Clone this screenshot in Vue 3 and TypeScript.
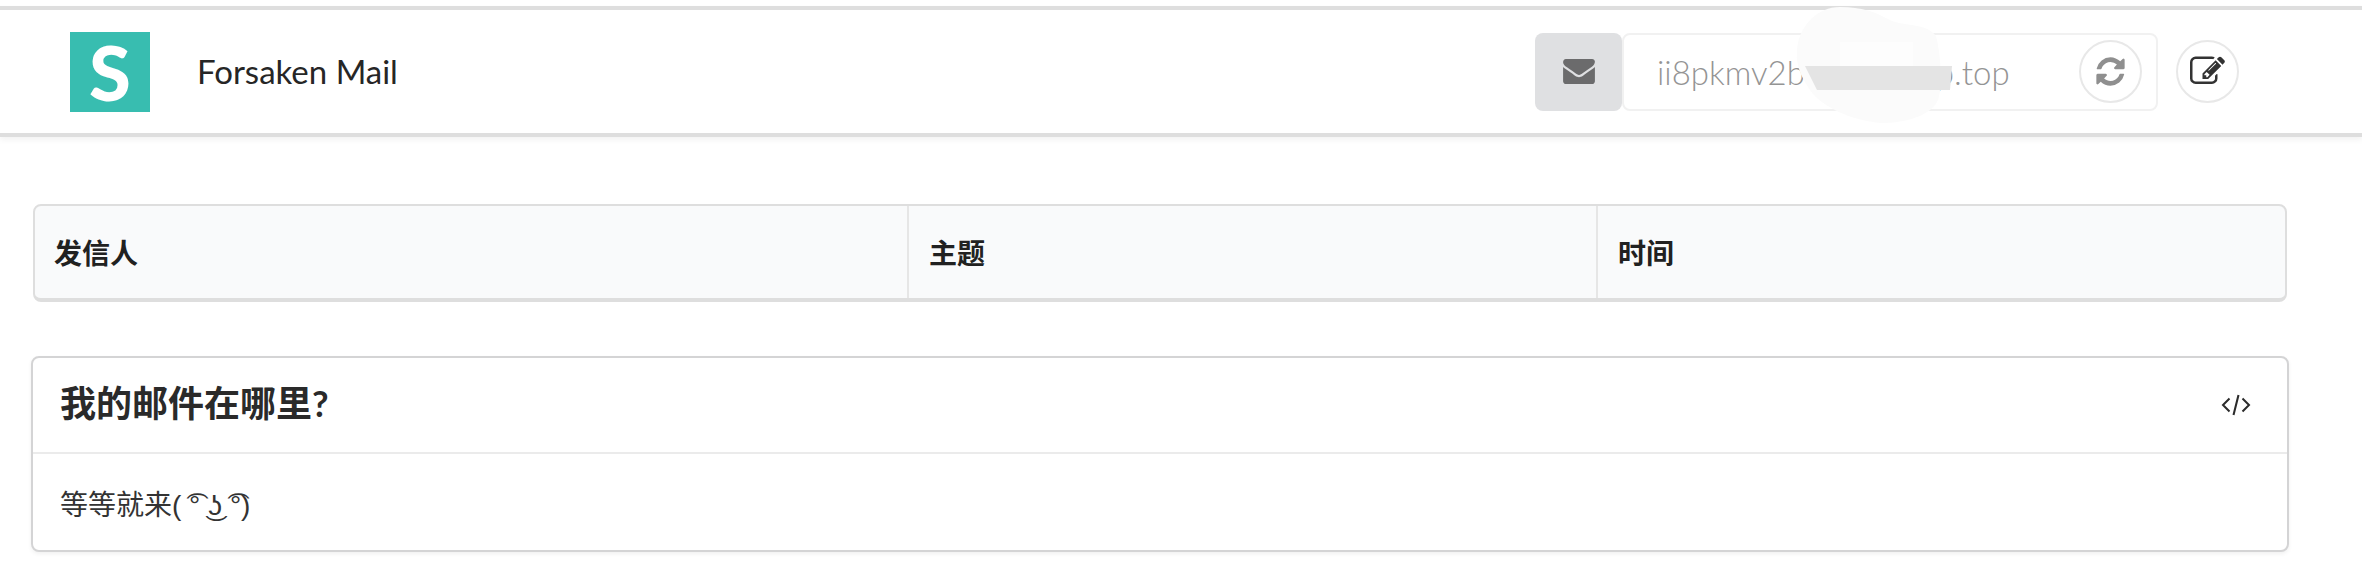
<script setup lang="ts">
const columns: { label: string; width: string }[] = [
  { label: '发信人', width: '872px' },
  { label: '主题', width: '689px' },
  { label: '时间', width: '1fr' },
];
const gridColumns = columns.map((c) => c.width).join(' ');
</script>

<template>
  <div class="page">
    <header class="topbar">
      <div class="brand">
        <span class="brand__logo">S</span>
        <span class="brand__name">Forsaken Mail</span>
      </div>
      <div class="address">
        <span class="address__addon">
          <svg viewBox="0 256 1792 1408" width="32" height="25" fill="#6b6b6c">
            <path d="M1792 710v794q0 66-47 113t-113 47h-1472q-66 0-113-47t-47-113v-794q44 49 101 87 362 246 497 345 57 42 92.500 65.500t94.500 48 110 24.500h2q51 0 110-24.500t94.500-48 92.500-65.500q170-123 498-345 57-39 100-87zm0-294q0 79-49 151t-122 123q-376 261-468 325-10 7-42.500 30.500t-54 38-52 32.500-57.500 27-50 9h-2q-23 0-50-9t-57.500-27-52-32.500-54-38-42.500-30.500q-91-64-262-182.500t-205-142.500q-62-42-117-115.500t-55-136.500q0-78 41.500-130t118.500-52h1472q65 0 112.500 47t47.500 113z" />
          </svg>
        </span>
        <div class="address__field">
          <span class="address__text">ii8pkmv2b</span>
          <span class="address__gap"></span>
          <span class="address__text">p.top</span>
          <button class="circle circle--inner" title="refresh">
            <svg viewBox="0 0 1792 1792" width="33" height="33" fill="#8f8f8f">
              <path d="M1639 1056q0 5-1 7-64 268-268 434.500t-478 166.500q-146 0-282.500-55t-243.500-157l-129 129q-19 19-45 19t-45-19-19-45v-448q0-26 19-45t45-19h448q26 0 45 19t19 45-19 45l-137 137q71 66 161 102t187 36q134 0 250-65t186-179q11-17 53-117 8-23 30-23h192q13 0 22.500 9.500t9.500 22.500zm25-800v448q0 26-19 45t-45 19h-448q-26 0-45-19t-19-45 19-45l138-138q-148-137-349-137-134 0-250 65t-186 179q-11 17-53 117-8 23-30 23h-199q-13 0-22.500-9.500t-9.500-22.500v-7q65-268 270-434.500t480-166.500q146 0 284 55.500t245 156.500l130-129q19-19 45-19t45 19 19 45z" />
            </svg>
          </button>
        </div>
        <!-- redaction smudge over the address -->
        <svg class="smudge" viewBox="0 0 170 130" width="170" height="130">
          <path
            fill="#fbfbfb"
            d="M50 7C72 7 85 12 100 20C115 27 135 22 146 36C152 60 152 90 148 100C140 118 110 123 92 123C60 121 30 105 20 90C10 75 6 65 7 50C9 25 28 7 50 7Z"
          />
          <rect x="50" y="42" width="73" height="24" fill="#fdfdfd" />
          <path fill="#e4e4e4" d="M15 66H162L160 90H27Z" />
        </svg>
      </div>
      <button class="circle circle--edit" title="edit">
        <svg viewBox="0 0 1792 1792" width="35" height="35" fill="#333">
          <path d="M888 1184l116-116-152-152-116 116v56h96v96h56zm440-720q-16-16-33 1l-350 350q-17 17-1 33t33-1l350-350q17-17 1-33zm80 594v190q0 119-84.500 203.500t-203.500 84.500h-832q-119 0-203.500-84.500t-84.500-203.500v-832q0-119 84.500-203.500t203.500-84.500h832q63 0 117 25 15 7 18 23 3 17-9 29l-49 49q-14 14-32 8-23-6-45-6h-832q-66 0-113 47t-47 113v832q0 66 47 113t113 47h832q66 0 113-47t47-113v-126q0-13 9-22l64-64q15-15 35-7t20 29zm-96-738l288 288-672 672h-288v-288zm444 132l-92 92-288-288 92-92q28-28 68-28t68 28l152 152q28 28 28 68t-28 68z" />
        </svg>
      </button>
    </header>

    <main class="content">
      <div class="table-head" :style="{ gridTemplateColumns: gridColumns }">
        <div v-for="col in columns" :key="col.label" class="table-head__cell">{{ col.label }}</div>
      </div>

      <section class="card">
        <div class="card__header">
          <h2 class="card__title">我的邮件在哪里?</h2>
          <svg class="card__code" viewBox="0 0 30 22" width="30" height="22" fill="none" stroke="#2b2b2b" stroke-width="2">
            <path d="M8.500 4.500 2 11l6.500 6.500" />
            <path d="M21.500 4.500 28 11l-6.500 6.500" />
            <path d="M17.500 1 12.500 21" />
          </svg>
        </div>
        <div class="card__body">等等就来<span class="card__face">( ͡° ͜ʖ ͡°)</span></div>
      </section>
    </main>
  </div>
</template>

<style scoped>
.page {
  width: 2362px;
  height: 587px;
  padding-top: 6px;
  box-sizing: border-box;
  background: #fff;
  color: #212121;
  font-family: Lato, "Noto Sans CJK SC", sans-serif;
  overflow: hidden;
}

.topbar {
  height: 131px;
  box-sizing: border-box;
  display: flex;
  align-items: center;
  padding: 0 123px 0 70px;
  border-top: 4px solid #dedede;
  border-bottom: 4px solid #dedede;
  box-shadow: 0 3px 6px rgba(0, 0, 0, 0.05);
}

.brand {
  display: flex;
  align-items: center;
  gap: 47px;
  margin-right: auto;
}

.brand__logo {
  width: 80px;
  height: 80px;
  display: flex;
  align-items: center;
  justify-content: center;
  background: #38bdb0;
  color: #fff;
  font-size: 76px;
  font-weight: 900;
  line-height: 1;
}

.brand__name {
  font-size: 33px;
  line-height: 1;
  color: #262626;
}

.address {
  position: relative;
  display: flex;
  align-items: stretch;
  height: 78px;
  margin-right: 18px;
}

.address__addon {
  width: 87px;
  display: flex;
  align-items: center;
  justify-content: center;
  background: #dfe0e2;
  border-radius: 8px;
}

.address__field {
  width: 536px;
  box-sizing: border-box;
  display: flex;
  align-items: center;
  padding: 0 14px 0 33px;
  border: 2px solid #f1f1f1;
  border-radius: 8px;
  background: #fff;
}

.address__text {
  font-family: Lato, sans-serif;
  font-weight: 300;
  font-size: 33px;
  color: #949494;
}

.address__gap {
  width: 131px;
}

.circle {
  display: flex;
  align-items: center;
  justify-content: center;
  padding: 0;
  width: 63px;
  height: 63px;
  background: #fff;
  border: 2px solid #e8e8e8;
  border-radius: 50%;
}

.circle--inner {
  margin-left: auto;
}

.smudge {
  position: absolute;
  left: 255px;
  top: -33px;
}

.content {
  padding: 67px 73px 0 31px;
  display: flex;
  flex-direction: column;
  gap: 54px;
}

.table-head {
  display: grid;
  height: 98px;
  box-sizing: border-box;
  margin: 0 2px 0 2px;
  background: #f9fafb;
  border: 2px solid #dedede;
  border-bottom-width: 4px;
  border-radius: 8px;
}

.table-head__cell {
  display: flex;
  align-items: center;
  padding-left: 20px;
  font-size: 28px;
  font-weight: 700;
  border-left: 2px solid #e6e6e6;
}

.table-head__cell:first-child {
  padding-left: 19px;
  border-left: none;
}

.card {
  height: 196px;
  box-sizing: border-box;
  background: #fff;
  border: 2px solid #d4d4d5;
  border-radius: 8px;
  box-shadow: 0 2px 4px rgba(0, 0, 0, 0.06);
}

.card__header {
  height: 96px;
  box-sizing: border-box;
  display: flex;
  align-items: center;
  justify-content: space-between;
  padding: 0 36px 8px 27px;
  border-bottom: 2px solid #ebebeb;
}

.card__code {
  margin-top: 8px;
}

.card__title {
  margin: 0;
  font-size: 36px;
  font-weight: 700;
  color: #2a2a2a;
}

.card__body {
  padding: 29px 27px;
  font-size: 28px;
  color: #333;
}

.card__face {
  font-family: "Liberation Sans", sans-serif;
}
</style>
